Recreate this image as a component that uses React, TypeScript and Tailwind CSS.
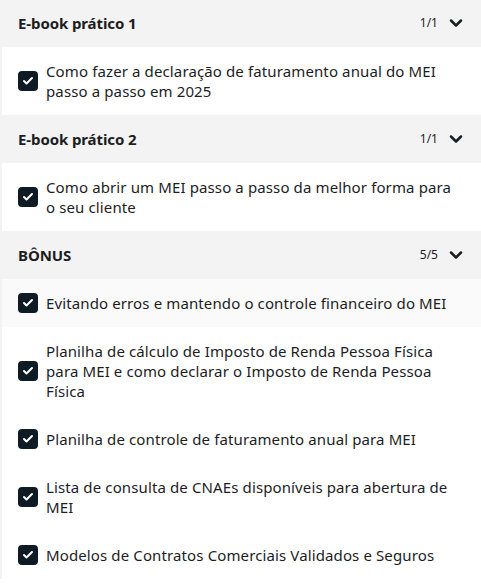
import { ChevronDown, Check } from 'lucide-react';

type Section = {
  title: string;
  count: string;
  items: { label: string; highlight?: boolean }[];
};

const sections: Section[] = [
  {
    title: 'E-book prático 1',
    count: '1/1',
    items: [{ label: 'Como fazer a declaração de faturamento anual do MEI passo a passo em 2025' }],
  },
  {
    title: 'E-book prático 2',
    count: '1/1',
    items: [{ label: 'Como abrir um MEI passo a passo da melhor forma para o seu cliente' }],
  },
  {
    title: 'BÔNUS',
    count: '5/5',
    items: [
      { label: 'Evitando erros e mantendo o controle financeiro do MEI', highlight: true },
      { label: 'Planilha de cálculo de Imposto de Renda Pessoa Física para MEI e como declarar o Imposto de Renda Pessoa Física' },
      { label: 'Planilha de controle de faturamento anual para MEI' },
      { label: 'Lista de consulta de CNAEs disponíveis para abertura de MEI' },
      { label: 'Modelos de Contratos Comerciais Validados e Seguros' },
    ],
  },
];

export default function App() {
  return (
    <div className="w-[481px] h-[588px] overflow-hidden bg-white font-['Noto_Sans',sans-serif] text-[#1c1d1f]">
      <div className="-mt-px">
        {sections.map(section => (
          <div key={section.title}>
            <div className="flex items-center justify-between h-12 bg-[#f3f3f3] pl-[18px] pr-[15px]">
              <span className="text-[15px] font-bold tracking-[-0.1px]">{section.title}</span>
              <div className="flex items-center gap-2">
                <span className="text-[12px]">{section.count}</span>
                <ChevronDown className="w-5 h-5" strokeWidth={3} />
              </div>
            </div>
            {section.items.map(item => (
              <div
                key={item.label}
                className={`flex items-center gap-2 py-[14px] pl-[18px] pr-5 border-l-2 border-[#f3f3f3] ${item.highlight ? 'bg-[#fafafa]' : 'bg-white'}`}
              >
                <div className="w-5 h-5 shrink-0 rounded-[4px] bg-[#0f1b24] flex items-center justify-center -ml-[2px]">
                  <Check className="w-3 h-3 text-white" strokeWidth={4} />
                </div>
                <p className="text-[15px] leading-5 tracking-[0.12px]">{item.label}</p>
              </div>
            ))}
          </div>
        ))}
      </div>
    </div>
  );
}
